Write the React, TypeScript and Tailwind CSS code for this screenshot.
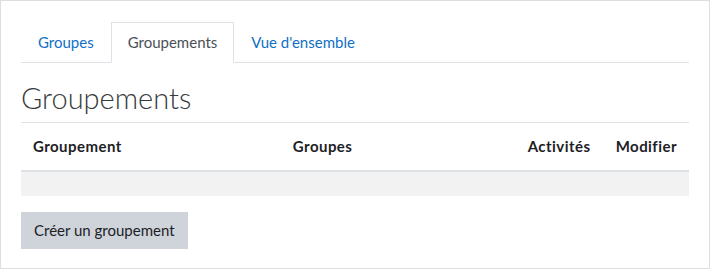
// Page de gestion des groupements (onglets + tableau vide + bouton)

const tabs = [
  { label: "Groupes", active: false },
  { label: "Groupements", active: true },
  { label: "Vue d'ensemble", active: false },
]

const columns = [
  { label: "Groupement", width: "w-[260px]" },
  { label: "Groupes", width: "w-[235px]" },
  { label: "Activités", width: "w-[88px]" },
  { label: "Modifier", width: "w-[85px]" },
]

export default function App() {
  return (
    <div className="w-[710px] h-[269px] bg-white border border-[#dedede] px-5 pt-[21px] font-['Lato',sans-serif] text-[15px] leading-[1.5] text-[#373a3c]">
      <ul className="flex border-b border-[#dee2e6]">
        {tabs.map((tab) => (
          <li key={tab.label} className="-mb-px">
            <a
              href="#"
              className={
                tab.active
                  ? "block px-4 py-2 border border-[#dee2e6] border-b-white bg-white text-[#495057]"
                  : "block px-4 py-2 border border-transparent text-[#0f6fc5]"
              }
            >
              {tab.label}
            </a>
          </li>
        ))}
      </ul>

      <h2 className="mt-[17px] mb-[6px] text-[29px] leading-[36px] font-light text-[#373a3c]">
        Groupements
      </h2>

      <table className="w-full border-collapse">
        <thead>
          <tr>
            {columns.map((col) => (
              <th
                key={col.label}
                className={`${col.width} px-3 py-[12.5px] text-left font-bold tracking-[0.45px] border-t border-[#dee2e6] border-b-2 text-[#1d2125]`}
              >
                {col.label}
              </th>
            ))}
          </tr>
        </thead>
        <tbody>
          <tr className="bg-[#f2f2f2]">
            {columns.map((col) => (
              <td key={col.label} className="p-3"></td>
            ))}
          </tr>
        </tbody>
      </table>

      <button className="mt-4 px-3 py-[6px] bg-[#ced4da] border border-[#ced4da] text-[#1d2125]">
        Créer un groupement
      </button>
    </div>
  )
}
